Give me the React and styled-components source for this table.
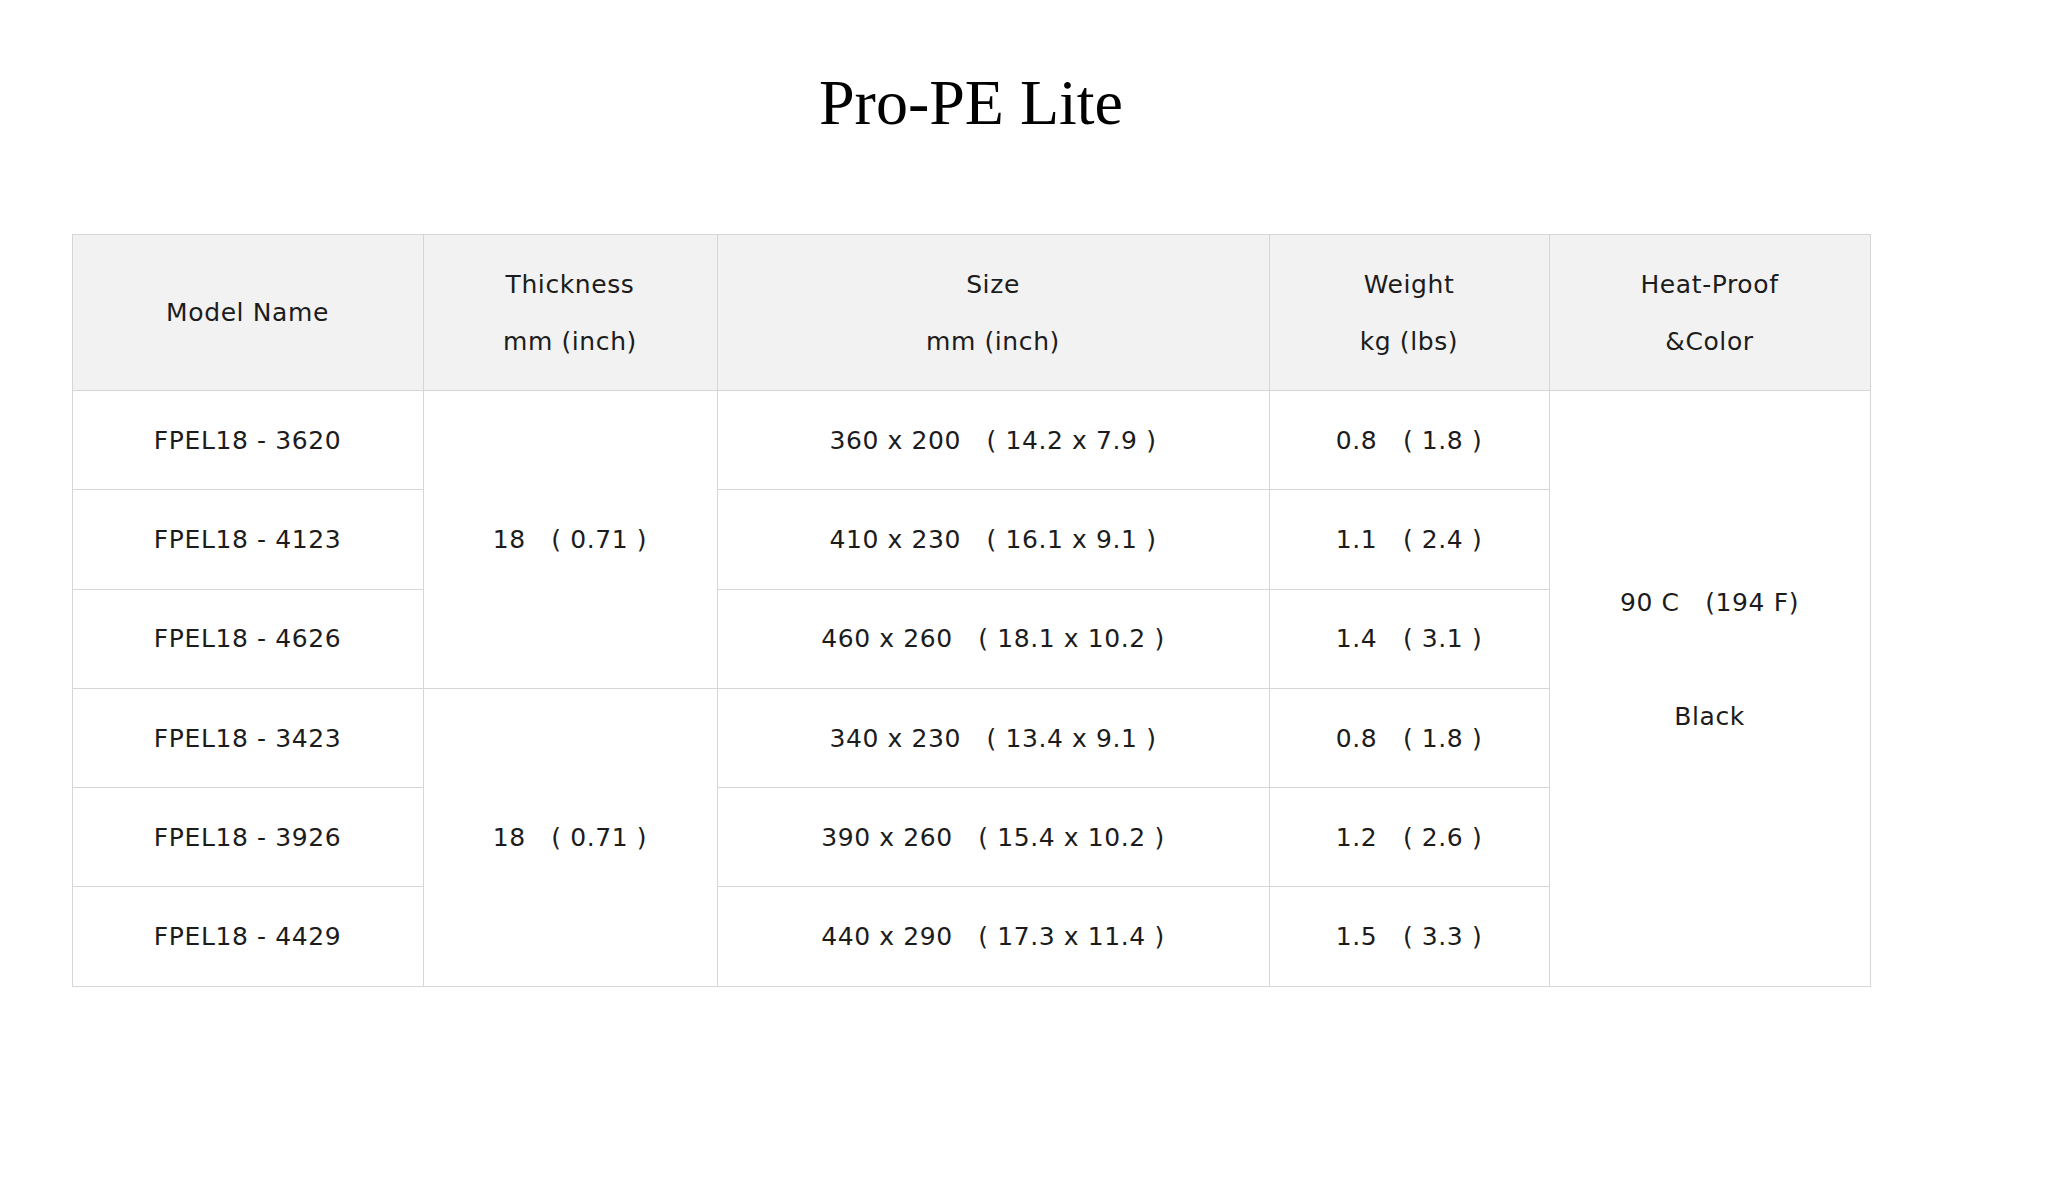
import React from "react";
import styled, { createGlobalStyle } from "styled-components";

const GlobalStyle = createGlobalStyle`
  html, body { margin: 0; padding: 0; background: #ffffff; }
  body { font-family: "DejaVu Sans", "Noto Sans CJK JP", sans-serif; color: #1c1c1c; }
`;

const Page = styled.main`
  padding: 0 0 0 72px;
`;

const Wrap = styled.section`
  width: 1798px;
  display: flex;
  flex-direction: column;
  align-items: center;
`;

const Title = styled.h1`
  margin: 71px 0 99px;
  font-family: "Liberation Serif", "Times New Roman", serif;
  font-weight: 400;
  font-size: 64px;
  line-height: 64px;
  color: #000;
`;

const Table = styled.table`
  width: 1798px;
  border-collapse: collapse;
  table-layout: fixed;
  border: 1px solid #d6d6d6;
`;

const HeadCell = styled.th`
  height: 155px;
  padding: 0;
  background: #f2f2f2;
  border: 1px solid #d6d6d6;
  font-weight: 400;
  font-size: 25px;
  letter-spacing: 0.6px;
  line-height: 57px;
  text-align: center;
  vertical-align: middle;
  color: #1c1c1c;
`;

const Cell = styled.td`
  height: 98.3px;
  padding: 0 0 ${(p) => (p.$tail ? "57px" : "0")};
  border: 1px solid #d6d6d6;
  font-size: 25px;
  letter-spacing: 0.6px;
  line-height: 57px;
  text-align: center;
  vertical-align: middle;
  white-space: nowrap;
`;

const SP = "\u3000";

const rows = [
  { model: "FPEL18 - 3620", size: `360 x 200${SP}( 14.2 x 7.9 )`, weight: `0.8${SP}( 1.8 )` },
  { model: "FPEL18 - 4123", size: `410 x 230${SP}( 16.1 x 9.1 )`, weight: `1.1${SP}( 2.4 )` },
  { model: "FPEL18 - 4626", size: `460 x 260${SP}( 18.1 x 10.2 )`, weight: `1.4${SP}( 3.1 )` },
  { model: "FPEL18 - 3423", size: `340 x 230${SP}( 13.4 x 9.1 )`, weight: `0.8${SP}( 1.8 )` },
  { model: "FPEL18 - 3926", size: `390 x 260${SP}( 15.4 x 10.2 )`, weight: `1.2${SP}( 2.6 )` },
  { model: "FPEL18 - 4429", size: `440 x 290${SP}( 17.3 x 11.4 )`, weight: `1.5${SP}( 3.3 )` },
];

export default function App() {
  return (
    <>
      <GlobalStyle />
      <Page>
        <Wrap>
          <Title>Pro-PE Lite</Title>
          <Table>
            <colgroup>
              <col style={{ width: 351 }} />
              <col style={{ width: 294 }} />
              <col style={{ width: 552 }} />
              <col style={{ width: 280 }} />
              <col style={{ width: 321 }} />
            </colgroup>
            <thead>
              <tr>
                <HeadCell>Model Name</HeadCell>
                <HeadCell>
                  Thickness
                  <br />
                  mm (inch)
                </HeadCell>
                <HeadCell>
                  Size
                  <br />
                  mm (inch)
                </HeadCell>
                <HeadCell>
                  Weight
                  <br />
                  kg (lbs)
                </HeadCell>
                <HeadCell>
                  Heat-Proof
                  <br />
                  &amp;Color
                </HeadCell>
              </tr>
            </thead>
            <tbody>
              {rows.map((r, i) => (
                <tr key={r.model}>
                  <Cell>{r.model}</Cell>
                  {i % 3 === 0 && <Cell rowSpan={3}>{`18${SP}( 0.71 )`}</Cell>}
                  <Cell>{r.size}</Cell>
                  <Cell>{r.weight}</Cell>
                  {i === 0 && (
                    <Cell rowSpan={6} $tail>
                      {`90 C${SP}(194 F)`}
                      <br />
                      <br />
                      Black
                    </Cell>
                  )}
                </tr>
              ))}
            </tbody>
          </Table>
        </Wrap>
      </Page>
    </>
  );
}
